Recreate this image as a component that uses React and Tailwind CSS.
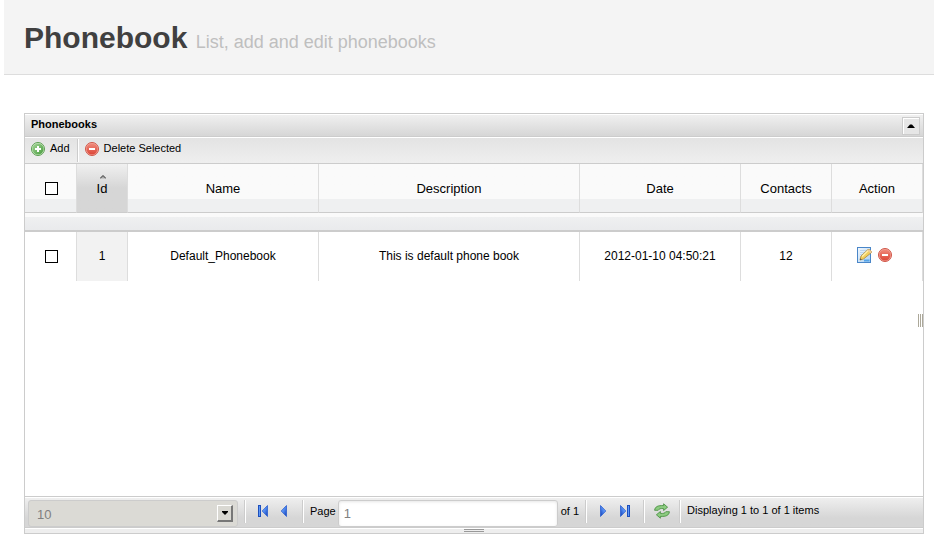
import React from "react";

const font = "font-['Liberation_Sans',Arial,sans-serif]";

function AddIcon() {
  return (
    <svg width="16" height="16" viewBox="0 0 16 16" className="block shrink-0" aria-hidden="true">
      <defs>
        <linearGradient id="addFill" x1="0" y1="0" x2="1" y2="1">
          <stop offset="0" stopColor="#a5d698" />
          <stop offset="1" stopColor="#469b3c" />
        </linearGradient>
      </defs>
      <circle cx="8" cy="8" r="6.5" fill="#d3ebcb" stroke="#5a9e4f" />
      <circle cx="8" cy="8" r="5.6" fill="url(#addFill)" />
      <path d="M8 5v6M5 8h6" stroke="#fff" strokeWidth="2" />
    </svg>
  );
}

function RemoveIcon() {
  return (
    <svg width="16" height="16" viewBox="0 0 16 16" className="block shrink-0" aria-hidden="true">
      <defs>
        <linearGradient id="removeFill" x1="0" y1="0" x2="0" y2="1">
          <stop offset="0" stopColor="#f08a7b" />
          <stop offset="1" stopColor="#dc4638" />
        </linearGradient>
      </defs>
      <circle cx="8" cy="8" r="6.5" fill="#f5aba0" stroke="#cf5547" />
      <circle cx="8" cy="8" r="5.5" fill="url(#removeFill)" />
      <path d="M5 8h6" stroke="#fff" strokeWidth="2" />
    </svg>
  );
}

function EditIcon() {
  return (
    <svg width="16" height="16" viewBox="0 0 16 16" className="block shrink-0" aria-hidden="true">
      <defs>
        <linearGradient id="pageFill" x1="0" y1="0" x2="1" y2="1">
          <stop offset="0" stopColor="#f4f9fe" />
          <stop offset="1" stopColor="#a9cff2" />
        </linearGradient>
      </defs>
      <rect x="1.5" y="0.5" width="13" height="15" fill="url(#pageFill)" stroke="#4a86c8" />
      <path d="M4 3.5h7M4 5.5h5M4 7.5h3" stroke="#bcd5ec" />
      <path d="M8 13.5h5.500" stroke="#55a5e8" strokeWidth="2" />
      <path d="M4 13l1-4 7-6.500h1.500l2 2v1l-8 6.500z" fill="#f1cf5c" stroke="#a98335" strokeWidth=".8" />
      <path d="M6 9.500l6.500-6.200" stroke="#fff1ae" strokeWidth="1.300" />
      <path d="M12 2.400h1.500l2 2v1l-1 .8-3.200-3z" fill="#eccb9c" />
      <path d="M4 13l.4-1.700 1.400 1.200z" fill="#4a4a40" />
    </svg>
  );
}

function PagerIcon({ bar, next }) {
  return (
    <svg width="16" height="16" viewBox="0 0 16 16" className="block" aria-hidden="true">
      <defs>
        <linearGradient id="pagerFill" x1="0" y1="0" x2="1" y2="1">
          <stop offset="0" stopColor="#9ac4ff" />
          <stop offset="0.500" stopColor="#4c86ee" />
          <stop offset="1" stopColor="#123bb0" />
        </linearGradient>
      </defs>
      <g transform={next ? "translate(16 0) scale(-1 1)" : undefined}>
        {bar && <rect x="3.500" y="2.500" width="2" height="11" fill="#5d98f5" stroke="#1d4fbd" />}
        <path
          d={bar ? "M12.500 2.500v11L7.200 8z" : "M10.500 2.500v11L5.200 8z"}
          fill="url(#pagerFill)"
          stroke="#2c60cf"
          strokeWidth=".8"
        />
      </g>
    </svg>
  );
}

function RefreshIcon() {
  return (
    <svg width="16" height="16" viewBox="0 0 16 16" className="block" aria-hidden="true">
      <g fill="#8ccb80" stroke="#438a3b" strokeWidth=".8" strokeLinejoin="round">
        <path d="M.6 7.300C1 3.600 4 2.300 9.600 2.600V.8l4 3.400-4 3.300V5.600C6.500 5.300 5 5.800 4.200 7.300z" />
        <path d="M15.400 8.700C15 12.400 12 13.700 6.400 13.400v1.800l-4-3.400 4-3.300v1.900c3.100.3 4.600-.2 5.400-1.700z" />
      </g>
    </svg>
  );
}

function Separator() {
  return <span className="h-[23px] w-0.5 shrink-0 border-l border-[#ccc] bg-white" />;
}

const columns = ["Name", "Description", "Date", "Contacts", "Action"];
const checkbox = "inline-block align-middle size-[13px] appearance-none border border-black bg-white checked:bg-black";
const cell = "border-r border-[#ddd] p-0 text-center font-normal";
const headCell = `${cell} border-b border-b-[#ccc] pt-0.5`;

export default function App() {
  return (
    <div className={`ml-1 mr-[13px] text-black ${font}`}>
      <header className="h-[75px] border-b border-[#ddd] bg-[#f4f4f4] px-5 pt-5">
        <h1 className="text-[30px] leading-9 font-bold text-[#404040]">
          Phonebook <small className="text-[18px] font-normal text-[#bfbfbf]">List, add and edit phonebooks</small>
        </h1>
      </header>

      <main className="mt-[38px] mr-[10px] ml-5 border border-[#ccc] text-[11px]">
        <div className="flex h-[23px] items-start justify-between border-b border-[#ccc] border-t border-t-white bg-linear-to-b from-[#f0f0f0] to-[#d6d6d6] pr-[3px] pl-1.5">
          <h2 className="leading-[18px] font-bold">Phonebooks</h2>
          <button
            type="button"
            aria-label="Collapse"
            className="mt-0.5 flex h-[18px] w-[18px] items-center justify-center border border-[#ccc] bg-[#e6e6e6] shadow-[inset_1px_1px_0_#fff]"
          >
            <svg width="8" height="4" viewBox="0 0 8 4" aria-hidden="true">
              <path d="M0 4l3-3.500h2L8 4z" fill="#000" />
            </svg>
          </button>
        </div>

        <div className="flex h-[27px] border-b border-[#ccc] border-t border-t-white bg-linear-to-b from-[#e3e3e3] to-[#efefef] pt-px pl-[5px]">
          <button type="button" className="flex h-5 items-center gap-1 pr-[7px]">
            <AddIcon />
            <span className="leading-[18px] pb-0.5">Add</span>
          </button>
          <Separator />
          <button type="button" className="flex h-5 items-center gap-1 pl-[5px]">
            <RemoveIcon />
            <span className="leading-[18px] pb-0.5">Delete Selected</span>
          </button>
        </div>

        <table className="w-full table-fixed border-separate border-spacing-0">
          <colgroup>
            <col className="w-[52px]" />
            <col className="w-[51px]" />
            <col className="w-[191px]" />
            <col />
            <col className="w-[161px]" />
            <col className="w-[91px]" />
            <col className="w-[91px]" />
          </colgroup>
          <thead>
            <tr className="h-[49px] bg-linear-to-b from-[#fafafa] from-[72%] to-[#eff0f1] to-[72%] text-[13px]">
              <th className={`${cell} border-b border-b-[#ccc] pl-0.5 leading-none`}>
                <input type="checkbox" aria-label="Select all" className={checkbox} />
              </th>
              <th className={`${headCell} bg-linear-to-b from-[#f0f0f0] to-[#d6d6d6] to-50%`}>
                <span className="relative">
                  <svg width="6" height="4" viewBox="0 0 6 4" className="absolute -top-1.5 left-[3px]" aria-hidden="true">
                    <path d="M0 3.500L3 .5l3 3z" fill="#aaa" />
                    <path d="M0 3.500l3-3 3 3" fill="none" stroke="#333" />
                  </svg>
                  Id
                </span>
              </th>
              {columns.map((name) => (
                <th key={name} className={headCell}>
                  {name}
                </th>
              ))}
            </tr>
            <tr className="h-[19px]">
              <td
                colSpan={7}
                className="border-b border-[#ccc] bg-linear-to-b from-[#fafafa] from-20% via-[#eff0f1] via-20% to-[#e9eaec] p-0 shadow-[inset_0_-1px_0_#ccc]"
              />
            </tr>
          </thead>
          <tbody>
            <tr className="h-[49px] text-[12px]">
              <td className={`${cell} pl-0.5 leading-none`}>
                <input type="checkbox" aria-label="Select Default_Phonebook" className={checkbox} />
              </td>
              <td className={`${cell} bg-[#f2f2f2] pb-0.5`}>1</td>
              <td className={`${cell} pb-0.5`}>Default_Phonebook</td>
              <td className={`${cell} pb-0.5`}>This is default phone book</td>
              <td className={`${cell} pb-0.5`}>2012-01-10 04:50:21</td>
              <td className={`${cell} pb-0.5`}>12</td>
              <td className={cell}>
                <div className="flex justify-center gap-[5px] pr-1.5 pb-1">
                  <button type="button" aria-label="Edit">
                    <EditIcon />
                  </button>
                  <button type="button" aria-label="Delete">
                    <RemoveIcon />
                  </button>
                </div>
              </td>
            </tr>
          </tbody>
        </table>

        <div className="flex h-[215px] justify-end pt-[33px]">
          <div className="h-[13px] w-[5px] cursor-e-resize border-x border-[#aca899] px-px">
            <div className="h-full w-px bg-[#aca899]" />
          </div>
        </div>

        <div className="flex h-[31px] border-t border-[#ccc] bg-linear-to-b from-[#f0f0f0] to-[#d6d6d6] to-70% pt-[3px] pl-[3px] shadow-[inset_0_1px_0_#fff]">
          <div className="relative h-[27px] w-[210px] shrink-0">
            <select
              aria-label="Rows per page"
              className="block h-full w-full appearance-none rounded-[3px] border border-[#ccc] bg-[#dbdad5] px-2 pt-0.5 text-[13px] text-[#808080]"
            >
              <option>10</option>
            </select>
            <span className="pointer-events-none absolute top-[5px] right-[5px] flex h-[17px] w-4 items-center justify-center border-t border-r-2 border-b-2 border-l border-t-white border-r-[#777] border-b-[#777] border-l-white bg-[#d9d8d2]">
              <svg width="6" height="4" viewBox="0 0 6 4" aria-hidden="true">
                <path d="M0 0h6v1L3 4 0 1z" fill="#000" />
              </svg>
            </span>
          </div>
          <div className="flex w-[64px] shrink-0 gap-[5px] pl-1.5">
            <Separator />
            <button type="button" aria-label="First page" className="ml-1 h-[22px]">
              <PagerIcon bar />
            </button>
            <button type="button" aria-label="Previous page" className="h-[22px]">
              <PagerIcon />
            </button>
          </div>
          <Separator />
          <label htmlFor="page" className="shrink-0 pl-1.5 leading-[22px]">
            Page
          </label>
          <input
            id="page"
            type="text"
            defaultValue="1"
            className="ml-0.5 h-[27px] w-[220px] rounded-[3px] border border-[#ccc] bg-white px-[5px] text-[13px] text-[#808080] shadow-[inset_0_1px_3px_rgba(0,0,0,0.1)] outline-none"
          />
          <span className="shrink-0 px-[3px] leading-[22px]">of 1</span>
          <div className="flex shrink-0 pl-[3px]">
            <Separator />
            <button type="button" aria-label="Next page" className="ml-2 h-[22px]">
              <PagerIcon next />
            </button>
            <button type="button" aria-label="Last page" className="mr-[10px] ml-[6px] h-[22px]">
              <PagerIcon next bar />
            </button>
            <Separator />
            <button type="button" aria-label="Refresh" className="mx-[9px] h-[22px]">
              <RefreshIcon />
            </button>
            <Separator />
          </div>
          <span className="pl-1.5 leading-5 whitespace-nowrap">Displaying 1 to 1 of 1 items</span>
        </div>

        <div className="flex h-1.5 justify-center border-t border-[#ccc] bg-[#eee] pt-px shadow-[inset_0_1px_0_#fff]">
          <div className="h-[3px] w-5 cursor-s-resize border-y border-[#999]" />
        </div>
      </main>
    </div>
  );
}
